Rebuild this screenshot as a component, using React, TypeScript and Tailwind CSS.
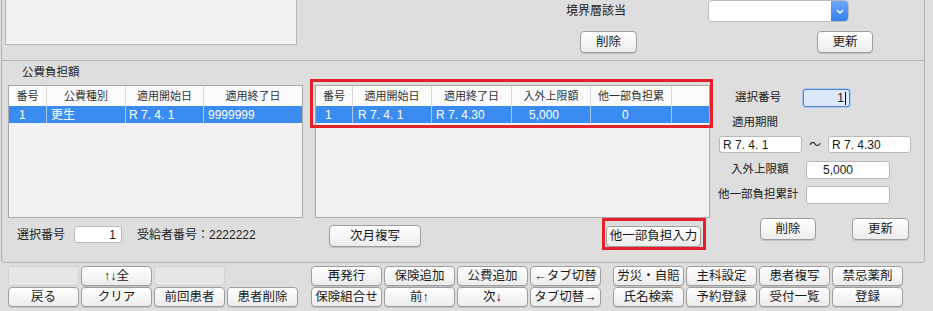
import React from "react";

const FONT = "font-['Liberation_Sans','Noto_Sans_CJK_JP',sans-serif]";

function Btn({ label, className = "" }: { label: string; className?: string }) {
    return (
        <div
            className={
                "flex items-center justify-center rounded-[4px] border border-[#9d9d9d] bg-linear-to-b from-white to-[#ececec] text-[12.5px] leading-none text-[#1a1a1a] shadow-[0_1px_0_rgba(0,0,0,0.12)] " +
                className
            }
        >
            {label}
        </div>
    );
}

function Blank() {
    return <div className="rounded-[3px] border border-[#d2d2d2] bg-[#e6e6e6]" />;
}

function Input({ value = "", className = "" }: { value?: string; className?: string }) {
    return (
        <div
            className={
                "flex items-center rounded-[3px] border border-[#b9b9b9] bg-white text-[12px] leading-none text-[#1a1a1a] " +
                className
            }
        >
            {value}
        </div>
    );
}

type Col = { title: string; w: string; value: string; pad: string };

function Table({ cols }: { cols: Col[] }) {
    return (
        <div className="flex h-[133px] flex-col border border-[#a9a9a9] bg-[#f2f2f2]">
            <div className="flex h-[20px] bg-[#fbfbfb]">
                {cols.map((c, i) => (
                    <div
                        key={i}
                        className={
                            "flex items-center justify-center border-r border-[#dadada] text-[11px] text-[#333] " +
                            c.w
                        }
                    >
                        {c.title}
                    </div>
                ))}
            </div>
            <div className="flex h-[17px] bg-[#3b8cf0]">
                {cols.map((c, i) => (
                    <div
                        key={i}
                        className={
                            "flex items-center border-r border-[#a9c8f3] text-[12px] leading-none text-white " +
                            c.w +
                            " " +
                            c.pad
                        }
                    >
                        {c.value}
                    </div>
                ))}
            </div>
        </div>
    );
}

const leftCols: Col[] = [
    { title: "番号", w: "w-[38px]", value: "1", pad: "pl-[10px]" },
    { title: "公費種別", w: "w-[79px]", value: "更生", pad: "pl-[4px]" },
    { title: "適用開始日", w: "w-[78px]", value: "R 7. 4. 1", pad: "pl-[3px]" },
    { title: "適用終了日", w: "flex-1 !border-r-0", value: "9999999", pad: "pl-[4px]" },
];

const midCols: Col[] = [
    { title: "番号", w: "w-[37px]", value: "1", pad: "pl-[9px]" },
    { title: "適用開始日", w: "w-[79px]", value: "R 7. 4. 1", pad: "pl-[5px]" },
    { title: "適用終了日", w: "w-[80px]", value: "R 7. 4.30", pad: "pl-[4px]" },
    { title: "入外上限額", w: "w-[79px]", value: "5,000", pad: "pl-[17px]" },
    { title: "他一部負担累", w: "w-[81px]", value: "0", pad: "pl-[31px]" },
    { title: "", w: "flex-1 !border-r-0", value: "", pad: "" },
];

export default function App() {
    return (
        <div className={"relative h-[311px] w-[933px] overflow-hidden bg-[#dedede] text-[#222] " + FONT}>
            {/* upper panel */}
            <div className="ml-[1px] flex h-[61px] w-[924px] border-x border-b border-[#b4b4b4]">
                <div className="ml-[3px] h-[45px] w-[292px] border border-t-0 border-[#b5b5b5] bg-[#f2f2f2]" />
                <div className="flex flex-col">
                    <div className="flex h-[22px] items-center">
                        <div className="ml-[269px] w-[142px] text-[12px] leading-none">境界層該当</div>
                        <div className="flex h-[22px] w-[141px] overflow-hidden rounded-[4px] border border-[#bdbdbd] bg-white">
                            <div className="flex-1" />
                            <div className="flex w-[17px] items-center justify-center bg-linear-to-b from-[#6aa6fa] to-[#3a7ff0]">
                                <svg width="8" height="5" viewBox="0 0 8 5">
                                    <path d="M1 1l3 3 3-3" stroke="white" strokeWidth="1.4" fill="none" />
                                </svg>
                            </div>
                        </div>
                    </div>
                    <div className="mt-[9px] flex">
                        <Btn label="削除" className="ml-[283px] h-[22px] w-[57px]" />
                        <Btn label="更新" className="ml-[180px] h-[22px] w-[56px]" />
                    </div>
                </div>
            </div>

            {/* lower panel */}
            <div className="ml-[1px] h-[202px] w-[924px] rounded-b-[4px] border-x border-b border-[#b4b4b4]">
                <div className="h-[24px] pl-[20px] pt-[3px] text-[11.5px] leading-[16px]">公費負担額</div>
                <div className="flex items-start">
                    {/* left */}
                    <div className="ml-[6px] w-[295px]">
                        <Table cols={leftCols} />
                        <div className="mt-[8px] flex h-[17px] items-center">
                            <div className="ml-[9px] w-[57px] text-[12px] leading-none">選択番号</div>
                            <Input value="1" className="h-[17px] w-[48px] justify-end pr-[5px]" />
                            <div className="ml-[15px] text-[12px] leading-none">受給者番号：2222222</div>
                        </div>
                    </div>

                    {/* middle */}
                    <div className="ml-[12px] w-[395px]">
                        <Table cols={midCols} />
                        <div className="mt-[7px] flex items-start">
                            <Btn label="次月複写" className="ml-[14px] h-[22px] w-[92px]" />
                            <Btn label="他一部負担入力" className="ml-[185px] mt-[1px] h-[21px] w-[95px]" />
                        </div>
                    </div>

                    {/* right */}
                    <div className="ml-[8px] flex w-[193px] flex-col">
                        <div className="mt-[4px] flex h-[18px] items-center">
                            <div className="ml-[17px] w-[68px] text-[11.5px] leading-none">選択番号</div>
                            <div className="flex h-[18px] w-[47px] items-center justify-end rounded-[3px] border border-[#4f86d6] bg-[#dce9fb] pr-[3px] text-[12px] leading-none shadow-[0_0_0_1px_#a9c7f1]">
                                1<span className="ml-[1px] inline-block h-[13px] w-[1px] bg-black" />
                            </div>
                        </div>
                        <div className="ml-[14px] mt-[7px] h-[16px] text-[11.5px] leading-[16px]">適用期間</div>
                        <div className="mt-[6px] flex h-[17px] items-center">
                            <Input value="R 7. 4. 1" className="ml-[1px] h-[17px] w-[83px] pl-[3px]" />
                            <div className="w-[26px] text-center text-[12px] leading-none">〜</div>
                            <Input value="R 7. 4.30" className="h-[17px] w-[83px] pl-[3px]" />
                        </div>
                        <div className="mt-[8px] flex h-[18px] items-center">
                            <div className="ml-[13px] w-[75px] text-[11.5px] leading-none">入外上限額</div>
                            <Input value="5,000" className="h-[18px] w-[84px] pl-[16px]" />
                        </div>
                        <div className="mt-[7px] flex h-[18px] items-center">
                            <div className="w-[88px] text-[11.5px] leading-none">他一部負担累計</div>
                            <Input className="h-[18px] w-[84px]" />
                        </div>
                        <div className="mt-[14px] flex">
                            <Btn label="削除" className="ml-[42px] h-[22px] w-[56px]" />
                            <Btn label="更新" className="ml-[36px] h-[22px] w-[57px]" />
                        </div>
                    </div>
                </div>
            </div>

            {/* function keys */}
            <div className="ml-[8px] mt-[3px] flex">
                <div className="grid w-[290px] grid-cols-4 grid-rows-[20px_20px] gap-x-[2px] gap-y-[1px] text-[12px]">
                    <Blank />
                    <Btn label="↑↓全" />
                    <Blank />
                    <div />
                    <Btn label="戻る" />
                    <Btn label="クリア" />
                    <Btn label="前回患者" />
                    <Btn label="患者削除" />
                </div>
                <div className="ml-[13px] grid w-[290px] grid-cols-4 grid-rows-[20px_20px] gap-x-[2px] gap-y-[1px]">
                    <Btn label="再発行" />
                    <Btn label="保険追加" />
                    <Btn label="公費追加" />
                    <Btn label="←タブ切替" />
                    <Btn label="保険組合せ" />
                    <Btn label="前↑" />
                    <Btn label="次↓" />
                    <Btn label="タブ切替→" />
                </div>
                <div className="ml-[12px] grid w-[290px] grid-cols-4 grid-rows-[20px_20px] gap-x-[2px] gap-y-[1px]">
                    <Btn label="労災・自賠" />
                    <Btn label="主科設定" />
                    <Btn label="患者複写" />
                    <Btn label="禁忌薬剤" />
                    <Btn label="氏名検索" />
                    <Btn label="予約登録" />
                    <Btn label="受付一覧" />
                    <Btn label="登録" />
                </div>
            </div>

            {/* annotation boxes */}
            <div className="pointer-events-none absolute left-[310px] top-[79px] h-[49px] w-[403px] border-[3px] border-[#e5202a]" />
            <div className="pointer-events-none absolute left-[602px] top-[218px] h-[32px] w-[104px] border-[3px] border-[#e5202a]" />
        </div>
    );
}
